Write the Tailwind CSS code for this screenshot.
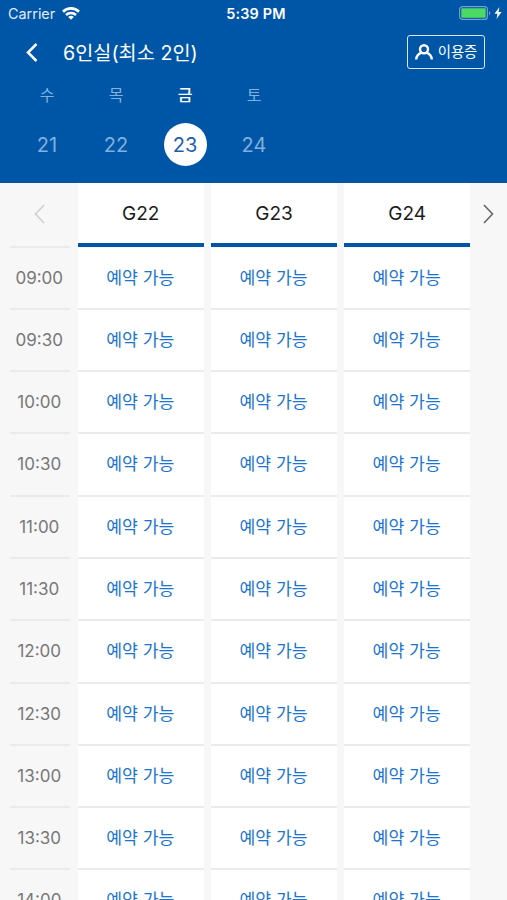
<!DOCTYPE html>
<html lang="ko">

<head>
  <meta charset="UTF-8" />
  <meta name="viewport" content="width=device-width, initial-scale=1.0" />
  <title>6인실 예약</title>
  <script src="https://cdn.jsdelivr.net/npm/@tailwindcss/browser@4"></script>
</head>

<body class="bg-[#f7f7f7] font-[Inter,'Noto_Sans_CJK_KR',sans-serif] overflow-hidden">
  <div class="flex flex-col w-[507px] h-[900px] overflow-hidden">

    <!-- Header -->
    <header class="h-[183px] shrink-0 bg-[#0056a6] text-white">
      <!-- Status bar -->
      <div class="grid grid-cols-3 items-center h-7 pl-2 pr-[5px] leading-none">
        <div class="flex items-center gap-[7px] text-[14.4px] text-[#e0ecf7]">
          <span>Carrier</span>
          <svg class="w-[18px] h-[13px] -mt-[1px]" viewBox="0 0 18 13" fill="none" stroke="#fff" stroke-width="2.6">
            <path d="M1 4.700C5.500.3 12.500.3 17 4.700" />
            <path d="M4 8C6.800 5.300 11.200 5.300 14 8" />
            <path d="M9 12.700L6.200 9.900C7.900 8.500 10.100 8.500 11.800 9.900Z" fill="#fff" stroke="none" />
          </svg>
        </div>
        <div class="pl-[2px] text-center text-[14.4px] font-semibold tracking-[0.2px] whitespace-nowrap">5:39 PM</div>
        <div class="flex items-center justify-end gap-[3px] -mt-[2px]">
          <svg class="w-[32px] h-[14px]" viewBox="0 0 32 14">
            <rect x=".6" y=".6" width="27.800" height="12.800" rx="3" fill="none" stroke="#709fca" stroke-width="1.200" />
            <rect x="2.300" y="2.300" width="24.400" height="9.400" rx="1" fill="#4cd964" />
            <path d="M30 5v4.500c1.800-.8 1.800-3.700 0-4.500Z" fill="#709fca" />
          </svg>
          <svg class="w-2 h-3" viewBox="0 0 7 12">
            <path d="M5 0L0 6.800h3L2 12 7 5H4Z" fill="#fff" />
          </svg>
        </div>
      </div>

      <!-- Title -->
      <div class="flex items-center h-12 pl-[26px] pr-[22px]">
        <svg class="w-3 h-[19px]" viewBox="0 0 12 19" fill="none" stroke="#fff" stroke-width="2.500">
          <path d="M10.500 1L2 9.500l8.500 8.500" />
        </svg>
        <h1 class="mt-[3px] ml-[25px] text-[19.7px] leading-none whitespace-nowrap">6인실(최소 2인)</h1>
        <button class="ml-auto flex items-center justify-center gap-[5px] w-[78px] h-[34px] border-[1.5px] border-[#dbe9f6] rounded-[3px]">
          <svg class="w-[18px] h-4" viewBox="0 0 18 16" fill="none" stroke="#fff" stroke-width="2.400">
            <circle cx="9" cy="5.300" r="4" />
            <path d="M1.200 15.500C1.500 11.900 3.800 9.600 6.500 8.700M11.500 8.700C14.200 9.600 16.500 11.900 16.800 15.500" />
          </svg>
          <span class="pt-px text-[14.400px] leading-none whitespace-nowrap">이용증</span>
        </button>
      </div>

      <!-- Dates -->
      <div class="grid grid-cols-[69px_69px_69px_69px] pl-[12.500px] pt-[9px] text-center text-[#7fb0de] leading-none">
        <div class="flex flex-col items-center gap-[17px]">
          <span class="text-[16px] h-[21px] leading-[21px]">수</span>
          <span class="text-[20px] size-[43px] leading-[44px]">21</span>
        </div>
        <div class="flex flex-col items-center gap-[17px]">
          <span class="text-[16px] h-[21px] leading-[21px]">목</span>
          <span class="text-[20px] size-[43px] leading-[44px]">22</span>
        </div>
        <div class="flex flex-col items-center gap-[17px]">
          <span class="text-[16px] h-[21px] leading-[21px] font-medium text-white">금</span>
          <span class="text-[20px] size-[43px] leading-[44px] rounded-full bg-white text-[#1d5fab]">23</span>
        </div>
        <div class="flex flex-col items-center gap-[17px]">
          <span class="text-[16px] h-[21px] leading-[21px]">토</span>
          <span class="text-[20px] size-[43px] leading-[44px]">24</span>
        </div>
      </div>
    </header>

    <!-- Rooms -->
    <div class="flex gap-[7.200px] h-[64.5px] shrink-0 pl-[10px] text-center text-[19px] text-[#1a1a1a]">
      <div class="w-[60px] mr-[.6px] pr-[2px] flex items-center justify-center border-b-2 border-[#ebebeb]">
        <svg class="w-[11px] h-5" viewBox="0 0 11 20" fill="none" stroke="#cfcfcf" stroke-width="1.500">
          <path d="M10 1L1.500 10l8.500 9" />
        </svg>
      </div>
      <div class="w-[126px] h-[64px] bg-white border-b-4 border-[#0056a6] leading-[61px]">G22</div>
      <div class="w-[126px] h-[64px] bg-white border-b-4 border-[#0056a6] leading-[61px]">G23</div>
      <div class="w-[126px] h-[64px] bg-white border-b-4 border-[#0056a6] leading-[61px]">G24</div>
      <div class="w-[22px] pb-[2px] flex items-center justify-center">
        <svg class="w-[11px] h-5" viewBox="0 0 11 20" fill="none" stroke="#666" stroke-width="1.600">
          <path d="M1 1l8.500 9L1 19" />
        </svg>
      </div>
    </div>

    <!-- Time slots -->
    <div id="slots"></div>
  </div>

  <script>
    const times = ['09:00', '09:30', '10:00', '10:30', '11:00', '11:30', '12:00', '12:30', '13:00', '13:30', '14:00'];
    const slot = '<div class="w-[126px] pr-px bg-white border-b-2 border-[#ebebeb] text-[#1b74d0] text-[17.2px] leading-[60px]">예약 가능</div>';

    document.getElementById('slots').innerHTML = times.map(time => `
      <div class="flex gap-[7.2px] h-[62.3px] pl-[10px] text-center">
        <div class="w-[60px] mr-[.6px] pr-[1.5px] border-b-2 border-[#ebebeb] text-[#777] text-[17px] leading-[60px]">${time}</div>
        ${slot.repeat(3)}
      </div>`).join('');
  </script>
</body>

</html>
